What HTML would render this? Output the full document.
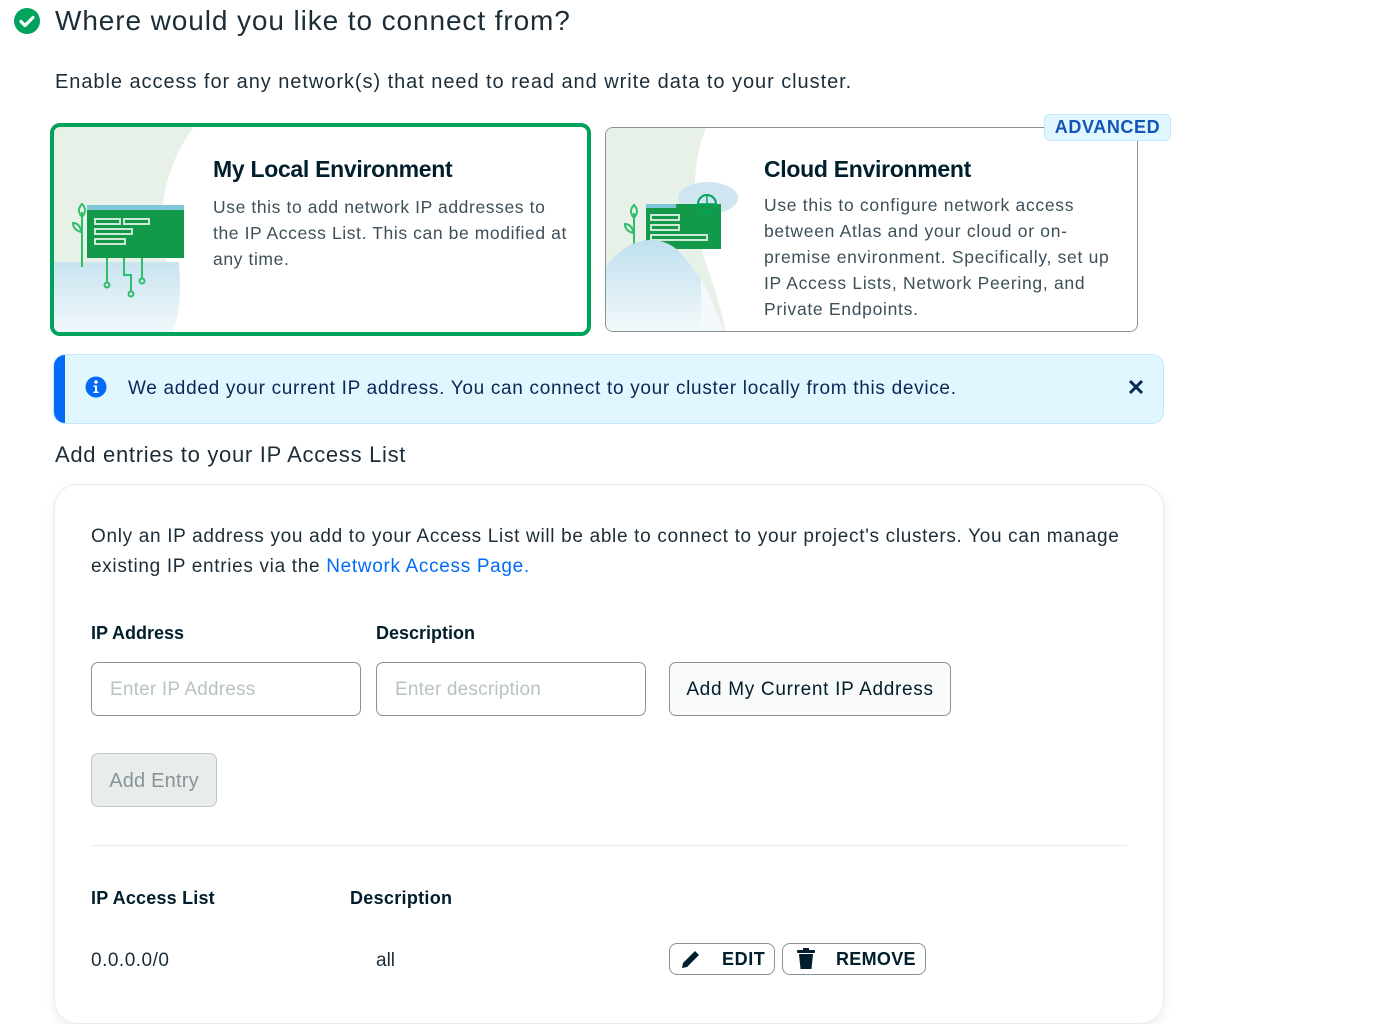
<!DOCTYPE html>
<html><head><meta charset="utf-8"><style>
*{margin:0;padding:0;box-sizing:border-box}
body{width:1387px;height:999px;overflow:hidden;background:#fff;font-family:"Liberation Sans",sans-serif;color:#001e2b;position:relative}
.a{position:absolute}
.t{white-space:nowrap}
</style></head><body>
<svg class="a" style="left:13px;top:7px" width="28" height="28" viewBox="0 0 28 28"><circle cx="14" cy="14" r="13" fill="#00a35c"/><path d="M8 14.5l4 4 8-8" stroke="#fff" stroke-width="3.2" fill="none" stroke-linecap="round" stroke-linejoin="round"/></svg>
<div class="a t" style="left:55px;top:5px;font-size:28px;letter-spacing:0.9px;color:#1c2d38">Where would you like to connect from?</div>
<div class="a t" style="left:55px;top:71px;font-size:20px;letter-spacing:0.95px;color:#1c2d38">Enable access for any network(s) that need to read and write data to your cluster.</div>

<!-- card 1 -->
<div class="a" style="left:50px;top:123px;width:541px;height:213px;border:4px solid #00a35c;border-radius:10px;overflow:hidden;background:#fff">
 <svg class="a" style="left:0;top:0" width="140" height="206" viewBox="0 0 140 206">
  <defs><linearGradient id="g1" x1="0" y1="0" x2="0" y2="1"><stop offset="0" stop-color="#c9e4f0"/><stop offset="1" stop-color="#f2f8fb"/></linearGradient></defs>
  <path d="M0 0H140C110 40 100 90 115 140C125 180 120 200 110 206H0Z" fill="#e8f1e8"/>
  <path d="M0 135H125C128 170 124 195 118 206H0Z" fill="url(#g1)"/>
  <rect x="33" y="78" width="97" height="53" fill="#129a4a"/><rect x="33" y="78" width="97" height="5" fill="#7ec8da"/>
  <g fill="none" stroke="#cfe8d6" stroke-width="2"><rect x="41" y="92" width="25" height="5"/><rect x="70" y="92" width="25" height="5"/><rect x="41" y="102" width="37" height="5"/><rect x="41" y="112" width="30" height="5"/></g>
  <g stroke="#2fbf6a" stroke-width="2" fill="none"><path d="M53 131V156M70 131V148H77V165M88 131V152M28 85V140"/><circle cx="53" cy="158" r="2.5"/><circle cx="77" cy="167" r="2.5"/><circle cx="88" cy="154" r="2.5"/><path d="M28 90c-5-6-3-10 0-13c3 3 5 7 0 13zM27 105c-7-2-8-6-8-9c4 0 8 3 8 9z"/></g>
 </svg>
 <div class="a t" style="left:159px;top:29px;font-size:23px;font-weight:bold;letter-spacing:-0.3px">My Local Environment</div>
 <div class="a t" style="left:159px;top:67px;font-size:17.5px;line-height:26px;color:#3d4f58;letter-spacing:0.6px">Use this to add network IP addresses to<br>the IP Access List. This can be modified at<br>any time.</div>
</div>

<!-- card 2 -->
<div class="a" style="left:605px;top:127px;width:533px;height:205px;border:1px solid #889397;border-radius:8px;overflow:hidden;background:#fff">
 <svg class="a" style="left:0;top:0" width="140" height="205" viewBox="0 0 140 205">
  <defs><linearGradient id="g2" x1="0" y1="0" x2="0" y2="1"><stop offset="0" stop-color="#bfe0ee"/><stop offset="1" stop-color="#f4f9fb"/></linearGradient></defs>
  <path d="M0 0H100C80 50 90 110 105 150C115 180 118 195 120 205H0Z" fill="#e8f1e8"/>
  <ellipse cx="102" cy="70" rx="30" ry="16" fill="#cfe6f1"/>
  <rect x="40" y="76" width="75" height="45" fill="#129a4a"/><rect x="40" y="76" width="30" height="4" fill="#7ec8da"/>
  <g fill="none" stroke="#cfe8d6" stroke-width="2"><rect x="45" y="87" width="28" height="5"/><rect x="45" y="97" width="28" height="5"/><rect x="45" y="107" width="56" height="5"/></g>
  <circle cx="101" cy="76" r="9" fill="none" stroke="#00a35c" stroke-width="2"/><path d="M92 76h18M101 67v18" stroke="#00a35c" stroke-width="1.5"/>
  <path d="M28 90c-5-6-3-10 0-13c3 3 5 7 0 13zM27 105c-7-2-8-6-8-9c4 0 8 3 8 9zM28 85V125" stroke="#2fbf6a" stroke-width="2" fill="none"/>
  <path d="M0 140C10 120 40 105 60 115C75 120 85 140 95 150V205H0Z" fill="url(#g2)"/>
  <path d="M95 150C105 170 112 190 120 205H95Z" fill="#f4f9fb"/>
 </svg>
 <div class="a t" style="left:158px;top:28px;font-size:23px;font-weight:bold;letter-spacing:-0.3px">Cloud Environment</div>
 <div class="a t" style="left:158px;top:64px;font-size:17.5px;line-height:26px;color:#3d4f58;letter-spacing:0.7px">Use this to configure network access<br>between Atlas and your cloud or on-<br>premise environment. Specifically, set up<br>IP Access Lists, Network Peering, and<br>Private Endpoints.</div>
</div>
<div class="a t" style="left:1044px;top:114px;width:127px;height:27px;background:#e1f7ff;border:1px solid #c3e7fe;border-radius:6px;color:#1254b7;font-weight:bold;font-size:18px;letter-spacing:0.6px;text-align:center;line-height:25px">ADVANCED</div>

<!-- banner -->
<div class="a" style="left:53px;top:354px;width:1111px;height:70px;background:#e1f7ff;border:1px solid #c3e7fe;border-radius:12px;overflow:hidden">
 <div class="a" style="left:0;top:0;width:11px;height:70px;background:#016bf8"></div>
</div>
<svg class="a" style="left:85px;top:376px" width="22" height="22" viewBox="0 0 22 22"><circle cx="11" cy="11" r="10.5" fill="#016bf8"/><circle cx="11" cy="6" r="1.8" fill="#fff"/><path d="M8.5 9.5h3.5v6h1.5v1.5h-5v-1.5h1.5v-4.5h-1.5z" fill="#fff"/></svg>
<div class="a t" style="left:128px;top:378px;font-size:19px;color:#0c2657;letter-spacing:0.7px">We added your current IP address. You can connect to your cluster locally from this device.</div>
<svg class="a" style="left:1128px;top:379px" width="16" height="16" viewBox="0 0 16 16"><path d="M2 2l12 12M14 2L2 14" stroke="#0c2657" stroke-width="3"/></svg>

<div class="a t" style="left:55px;top:442px;font-size:22px;letter-spacing:0.7px;color:#1c2d38">Add entries to your IP Access List</div>

<!-- panel -->
<div class="a" style="left:54px;top:484px;width:1110px;height:540px;border:1px solid #e8edeb;border-radius:24px;box-shadow:0 4px 10px rgba(0,30,43,0.08)"></div>
<div class="a t" style="left:91px;top:522px;font-size:19px;line-height:30px;color:#1c2d38;letter-spacing:0.68px">Only an IP address you add to your Access List will be able to connect to your project's clusters. You can manage<br>existing IP entries via the <span style="color:#016bf8">Network Access Page.</span></div>
<div class="a t" style="left:91px;top:623px;font-size:18px;font-weight:bold">IP Address</div>
<div class="a t" style="left:376px;top:623px;font-size:18px;font-weight:bold">Description</div>
<div class="a" style="left:91px;top:662px;width:270px;height:54px;border:1px solid #889397;border-radius:7px"></div>
<div class="a t" style="left:110px;top:679px;font-size:19px;color:#b8c4c2;letter-spacing:0.2px">Enter IP Address</div>
<div class="a" style="left:376px;top:662px;width:270px;height:54px;border:1px solid #889397;border-radius:7px"></div>
<div class="a t" style="left:395px;top:679px;font-size:19px;color:#b8c4c2;letter-spacing:0.2px">Enter description</div>
<div class="a t" style="left:669px;top:662px;width:282px;height:54px;border:1px solid #889397;border-radius:7px;background:#f9fbfa;font-size:19px;line-height:54px;text-align:center;letter-spacing:0.7px">Add My Current IP Address</div>
<div class="a t" style="left:91px;top:753px;width:126px;height:54px;border:1px solid #c1c7c6;border-radius:7px;background:#e8edeb;color:#889397;font-size:20px;line-height:54px;text-align:center;letter-spacing:0.2px">Add Entry</div>
<div class="a" style="left:91px;top:845px;width:1036px;height:1px;background:#e8edeb"></div>
<div class="a t" style="left:91px;top:888px;font-size:18px;font-weight:bold;letter-spacing:0.2px">IP Access List</div>
<div class="a t" style="left:350px;top:888px;font-size:18px;font-weight:bold;letter-spacing:0.3px">Description</div>
<div class="a t" style="left:91px;top:950px;font-size:19px;color:#1c2d38;letter-spacing:0.5px">0.0.0.0/0</div>
<div class="a t" style="left:376px;top:950px;font-size:19px;color:#1c2d38">all</div>
<div class="a" style="left:669px;top:943px;width:106px;height:32px;border:1px solid #889397;border-radius:8px"></div>
<svg class="a" style="left:680px;top:948px" width="22" height="22" viewBox="0 0 22 22"><path d="M2 20l1-5L15 3l4 4L7 19z" fill="#001e2b"/><path d="M16 2l4 4" stroke="#fff" stroke-width="1.5"/></svg>
<div class="a t" style="left:722px;top:949px;font-size:18px;font-weight:bold;letter-spacing:0.6px">EDIT</div>
<div class="a" style="left:782px;top:943px;width:144px;height:32px;border:1px solid #889397;border-radius:8px"></div>
<svg class="a" style="left:796px;top:948px" width="20" height="22" viewBox="0 0 20 22"><rect x="1" y="2" width="18" height="3" rx="1" fill="#001e2b"/><rect x="7" y="0" width="6" height="3" fill="#001e2b"/><path d="M3 6h14l-1.5 15h-11z" fill="#001e2b"/></svg>
<div class="a t" style="left:836px;top:949px;font-size:18px;font-weight:bold;letter-spacing:0.3px">REMOVE</div>
</body></html>
